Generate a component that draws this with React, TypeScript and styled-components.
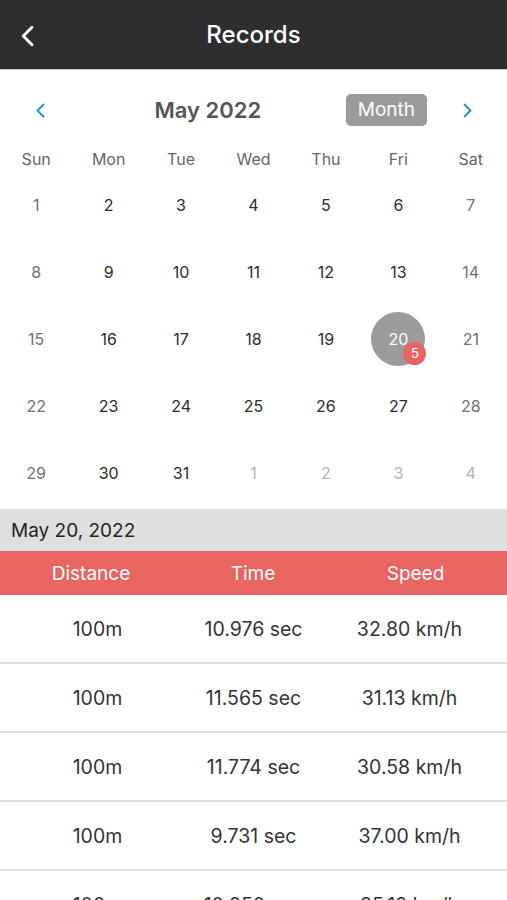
import styled, { createGlobalStyle } from "styled-components";

const GlobalStyle = createGlobalStyle`
  body {
    margin: 0;
    background: #ffffff;
    font-family: Inter, "Noto Sans", sans-serif;
  }
`;

const Page = styled.div`
  width: 507px;
  height: 900px;
  overflow: hidden;
  background: #ffffff;
`;

const Header = styled.header`
  height: 69px;
  background: #2e2e30;
  border-bottom: 1px solid #c9c9c9;
  display: grid;
  grid-template-columns: 56px 1fr 56px;
  align-items: center;
`;

const BackButton = styled.div`
  display: flex;
  justify-content: center;
  padding-top: 2px;
`;

const Title = styled.h1`
  margin: 0;
  text-align: center;
  color: #ffffff;
  font-size: 24px;
  font-weight: 500;
`;

const MonthBar = styled.div`
  height: 76px;
  display: grid;
  grid-template-columns: 80px 1fr auto 80px;
  align-items: center;
  padding-top: 2px;
`;

const NavArrow = styled.div`
  display: flex;
  justify-content: center;
`;

const MonthTitle = styled.div`
  text-align: center;
  padding-right: 10px;
  font-size: 22px;
  font-weight: 600;
  color: #555555;
`;

const ModeButton = styled.div`
  background: #9a9a9a;
  color: #ffffff;
  border-radius: 5px;
  font-size: 19px;
  padding: 4px 12px 5px;
`;

const Week = styled.div`
  display: grid;
  grid-template-columns: repeat(7, 1fr);
  height: 22px;
  align-items: center;
  text-align: center;
  color: #666666;
  font-size: 16px;
`;

const Days = styled.div`
  display: grid;
  grid-template-columns: repeat(7, 1fr);
  grid-auto-rows: 67px;
  padding-top: 1px;
`;

const DayCell = styled.div`
  display: flex;
  align-items: center;
  justify-content: center;
`;

const DayNum = styled.div<{ $tone: "weekday" | "weekend" | "muted"; $selected?: boolean }>`
  position: relative;
  width: 54px;
  height: 54px;
  border-radius: 50%;
  display: flex;
  align-items: center;
  justify-content: center;
  font-size: 16px;
  background: ${({ $selected }) => ($selected ? "#9b9b9b" : "transparent")};
  color: ${({ $tone, $selected }) =>
    $selected
      ? "#ffffff"
      : $tone === "weekday"
      ? "#2b2b2b"
      : $tone === "weekend"
      ? "#707070"
      : "#b3b3b3"};
`;

const Badge = styled.span`
  position: absolute;
  right: -1px;
  bottom: 1px;
  width: 23px;
  height: 23px;
  border-radius: 50%;
  background: #e76462;
  color: #ffffff;
  font-size: 13px;
  display: flex;
  align-items: center;
  justify-content: center;
`;

const DateBar = styled.div`
  margin-top: 3px;
  height: 42px;
  background: #dfdfdf;
  display: flex;
  align-items: center;
  padding-left: 11px;
  font-size: 19px;
  color: #222222;
`;

const TableHead = styled.div`
  height: 44px;
  background: #e86562;
  display: grid;
  grid-template-columns: 182px 142px 1fr;
  align-items: center;
  text-align: center;
  color: #ffffff;
  font-size: 19px;
`;

const Row = styled.div`
  height: 67px;
  border-bottom: 2px solid #dcdcdc;
  display: grid;
  grid-template-columns: 195px 117px 1fr;
  align-items: center;
  text-align: center;
  color: #333333;
  font-size: 19.5px;
`;

const Chevron = ({ dir, color, size, width }: { dir: "left" | "right"; color: string; size: number; width: number }) => (
  <svg width={size * 0.6} height={size} viewBox="0 0 12 20" fill="none">
    <path
      d={dir === "left" ? "M10 2 L2 10 L10 18" : "M2 2 L10 10 L2 18"}
      stroke={color}
      strokeWidth={width}
      strokeLinecap="round"
      strokeLinejoin="round"
    />
  </svg>
);

type Day = { n: number; tone: "weekday" | "weekend" | "muted"; selected?: boolean; count?: number };

const buildDays = (): Day[] => {
  const days: Day[] = [];
  for (let i = 0; i < 35; i++) {
    const inMonth = i < 31;
    const n = inMonth ? i + 1 : i - 30;
    const col = i % 7;
    days.push({
      n,
      tone: !inMonth ? "muted" : col === 0 || col === 6 ? "weekend" : "weekday",
      selected: inMonth && n === 20,
      count: inMonth && n === 20 ? 5 : undefined,
    });
  }
  return days;
};

const records = [
  ["100m", "10.976 sec", "32.80 km/h"],
  ["100m", "11.565 sec", "31.13 km/h"],
  ["100m", "11.774 sec", "30.58 km/h"],
  ["100m", "9.731 sec", "37.00 km/h"],
  ["100m", "10.250 sec", "35.12 km/h"],
];

const weekdays = ["Sun", "Mon", "Tue", "Wed", "Thu", "Fri", "Sat"];

const App = () => {
  const days = buildDays();

  return (
    <Page>
      <GlobalStyle />
      <Header>
        <BackButton>
          <Chevron dir="left" color="#ffffff" size={22} width={2.6} />
        </BackButton>
        <Title>Records</Title>
        <div />
      </Header>

      <MonthBar>
        <NavArrow>
          <Chevron dir="left" color="#1e8ee6" size={15} width={2.4} />
        </NavArrow>
        <MonthTitle>May 2022</MonthTitle>
        <ModeButton>Month</ModeButton>
        <NavArrow>
          <Chevron dir="right" color="#1e8ee6" size={15} width={2.4} />
        </NavArrow>
      </MonthBar>

      <Week>
        {weekdays.map((w) => (
          <span key={w}>{w}</span>
        ))}
      </Week>

      <Days>
        {days.map((d, i) => (
          <DayCell key={i}>
            <DayNum $tone={d.tone} $selected={d.selected}>
              {d.n}
              {d.count && <Badge>{d.count}</Badge>}
            </DayNum>
          </DayCell>
        ))}
      </Days>

      <DateBar>May 20, 2022</DateBar>
      <TableHead>
        <span>Distance</span>
        <span>Time</span>
        <span>Speed</span>
      </TableHead>
      {records.map((r, i) => (
        <Row key={i}>
          {r.map((c, j) => (
            <span key={j}>{c}</span>
          ))}
        </Row>
      ))}
    </Page>
  );
};

export default App;
